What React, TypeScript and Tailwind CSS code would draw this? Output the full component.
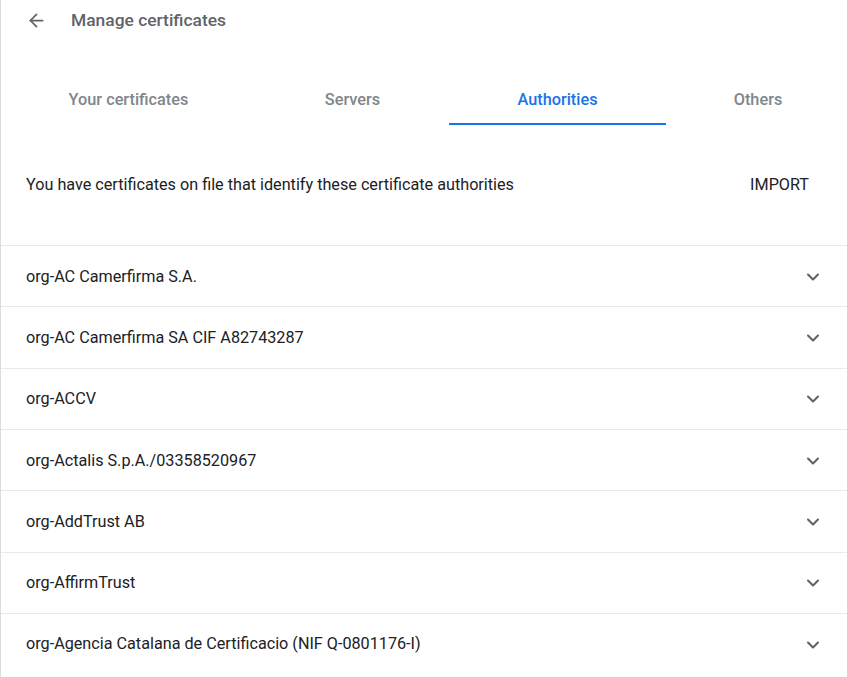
import { ArrowLeft, ChevronDown } from "lucide-react"

const authorities = [
    "org-AC Camerfirma S.A.",
    "org-AC Camerfirma SA CIF A82743287",
    "org-ACCV",
    "org-Actalis S.p.A./03358520967",
    "org-AddTrust AB",
    "org-AffirmTrust",
    "org-Agencia Catalana de Certificacio (NIF Q-0801176-I)",
]

function Tabs() {
    return (
        <div className="flex h-[85px] items-stretch pt-[45px] text-[16.3px] font-medium">
            <div className="w-[255px] shrink-0 flex flex-col items-center justify-between text-[#80868b]">
                <span className="leading-[30px]">Your certificates</span>
                <span className="h-[2px]" />
            </div>
            <div className="w-[193px] shrink-0 flex flex-col items-center justify-between text-[#80868b]">
                <span className="leading-[30px]">Servers</span>
                <span className="h-[2px]" />
            </div>
            <div className="w-[217px] shrink-0 flex flex-col items-center justify-between text-[#1a73e8]">
                <span className="leading-[30px]">Authorities</span>
                <span className="h-[2px] w-full bg-[#1a73e8]" />
            </div>
            <div className="w-[184px] shrink-0 flex flex-col items-center justify-between text-[#80868b]">
                <span className="leading-[30px]">Others</span>
                <span className="h-[2px]" />
            </div>
        </div>
    )
}

export default function App() {
    return (
        <div className="min-h-[677px] w-[847px] bg-white border-l border-[#dadce0] font-['Roboto',sans-serif] overflow-hidden">
            <div className="flex items-center h-[40px] pl-[25px]">
                <ArrowLeft className="h-[21px] w-[21px] text-[#5f6368]" strokeWidth={2} />
                <span className="ml-[24px] text-[17.4px] font-medium text-[#5f6368]">Manage certificates</span>
            </div>
            <Tabs />
            <div className="flex items-center justify-between h-[120px] pl-[25px] pr-[38px] text-[16.2px] text-[#202124]">
                <span>You have certificates on file that identify these certificate authorities</span>
                <span>IMPORT</span>
            </div>
            <ul className="text-[16.2px] text-[#202124]">
                {authorities.map((name) => (
                    <li key={name} className="flex items-center justify-between h-[61.33px] border-t border-[#e8eaed] pl-[25px] pr-[24px] pt-[1px]">
                        <span>{name}</span>
                        <ChevronDown className="h-[20px] w-[20px] text-[#5f6368]" strokeWidth={2.5} />
                    </li>
                ))}
            </ul>
        </div>
    )
}
